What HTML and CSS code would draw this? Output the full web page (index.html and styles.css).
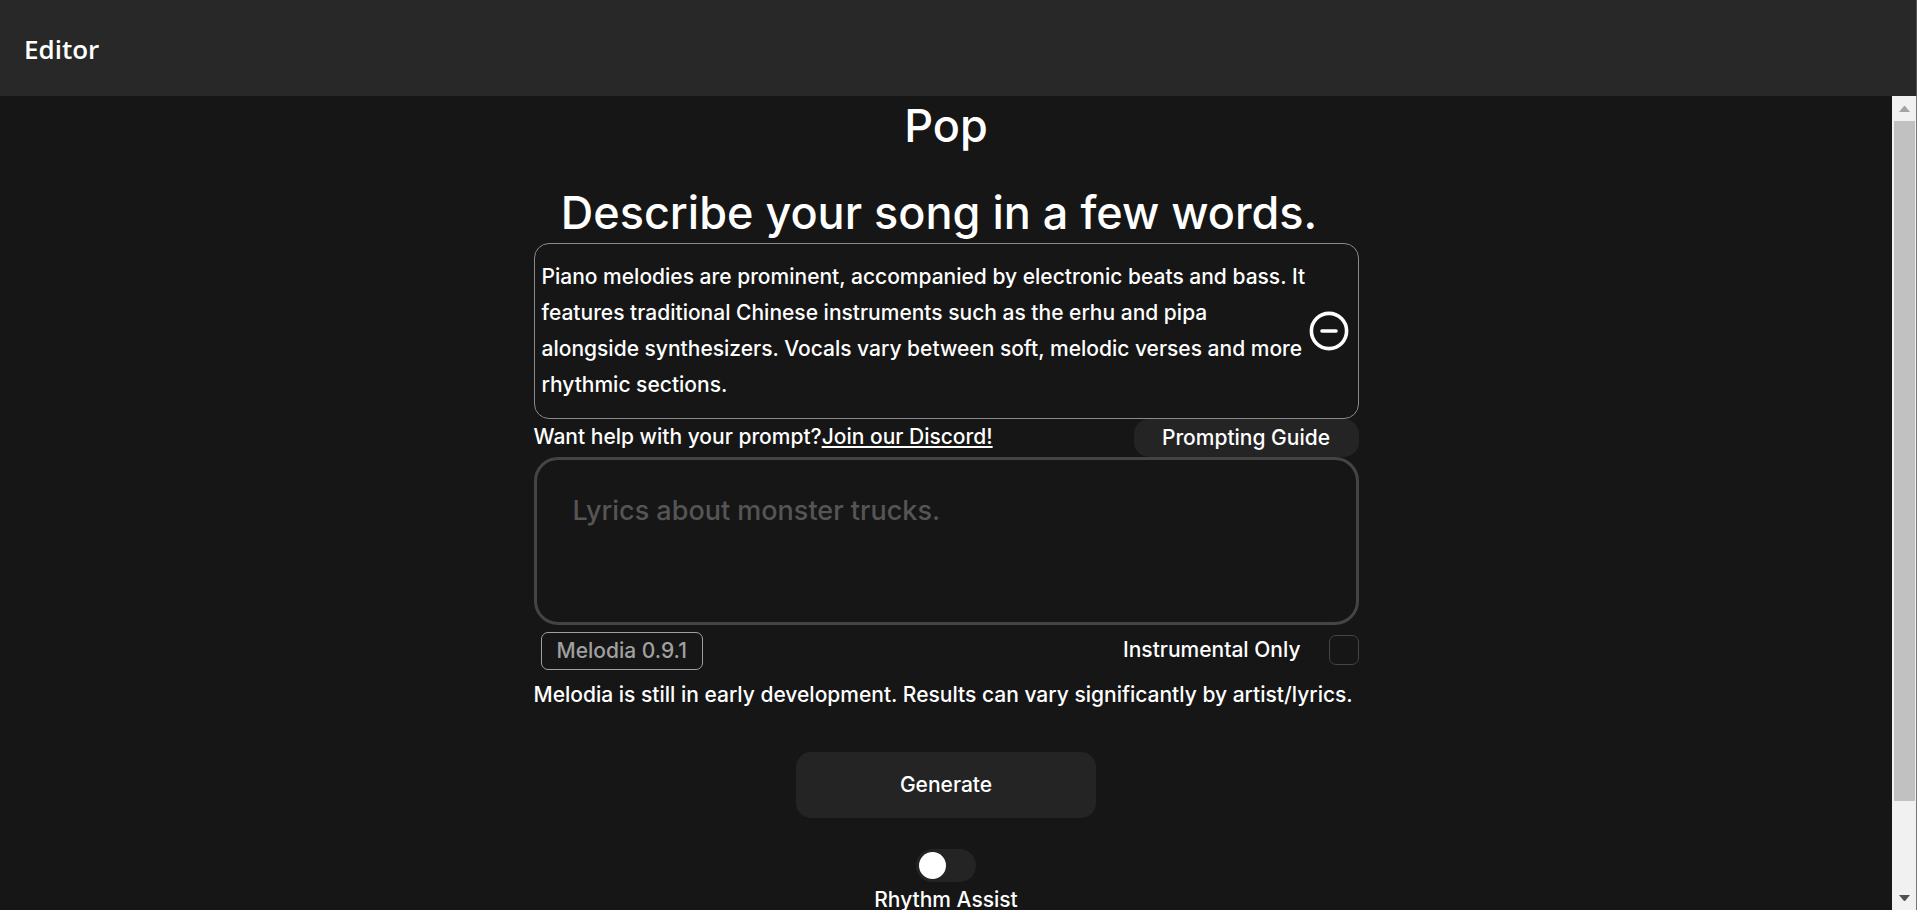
FILE: index.html
```html
<!DOCTYPE html>
<html lang="en">
<head>
  <meta charset="UTF-8" />
  <meta name="viewport" content="width=device-width, initial-scale=1.0"/>
  <title>Editor</title>
  <link rel="stylesheet" href="styles.css">
</head>
<body>
  <header class="topbar">
    <div class="topbar-title">Editor</div>
  </header>

  <div class="page">
    <main class="content">
      <div class="editor">
        <h1 class="genre">Pop</h1>
        <h2 class="heading">Describe your song in a few words.</h2>

        <div class="prompt">
          <p class="prompt-text">Piano melodies are prominent, accompanied by electronic beats and bass. It features traditional Chinese instruments such as the erhu and pipa alongside synthesizers. Vocals vary between soft, melodic verses and more rhythmic sections.</p>
          <button class="remove" type="button" aria-label="Remove prompt">
            <svg width="40" height="40" viewBox="0 0 40 40" fill="none" stroke="#fff" stroke-width="3.6" stroke-linecap="round">
              <circle cx="20" cy="20" r="17.6" />
              <path d="M13 20h14" />
            </svg>
          </button>
        </div>

        <div class="help">
          <p>Want help with your prompt?<a href="#">Join our Discord!</a></p>
          <button class="guide" type="button">Prompting Guide</button>
        </div>

        <textarea class="lyrics" aria-label="Lyrics" placeholder="Lyrics about monster trucks."></textarea>

        <div class="options">
          <span class="version">Melodia 0.9.1</span>
          <label class="instrumental">Instrumental Only <input type="checkbox"></label>
        </div>
        <p class="notice">Melodia is still in early development. Results can vary significantly by artist/lyrics.</p>

        <button class="generate" type="button">Generate</button>

        <label class="assist">
          <input class="switch" type="checkbox" role="switch">
          Rhythm Assist
        </label>
      </div>
    </main>

    <div class="scrollbar" aria-hidden="true">
      <svg class="arrow" width="11" height="6" viewBox="0 0 11 6"><path d="M0 6L5 0h1l5 6z" fill="#a3a3a3" /></svg>
      <div class="track"><div class="thumb"></div></div>
      <svg class="arrow" width="11" height="6" viewBox="0 0 11 6"><path d="M0 0L5 6h1l5-6z" fill="#505050" /></svg>
    </div>
  </div>
</body>
</html>
```
FILE: styles.css
```css
* {
  box-sizing: border-box;
}
body {
  margin: 0;
  height: 100vh;
  display: flex;
  flex-direction: column;
  overflow: hidden;
  background: #161616;
  color: #fff;
  font-family: Inter, sans-serif;
  font-size: 21px;
  font-weight: 500;
  line-height: 36px;
}
h1, h2, p {
  margin: 0;
}
button, input, textarea {
  font: inherit;
  color: inherit;
  margin: 0;
}
button {
  border: none;
  padding: 0;
  cursor: pointer;
}
.topbar {
  display: flex;
  align-items: center;
  flex: none;
  height: 96px;
  padding: 2px 24px 0;
  background: #282828;
  border-right: 1px solid #555;
}
.topbar-title {
  font-family: "Open Sans", sans-serif;
  font-size: 26px;
  font-weight: 600;
}
.page {
  display: flex;
  flex: 1;
  min-height: 0;
}
.content {
  flex: 1;
  overflow: hidden;
}
.editor {
  display: flex;
  flex-direction: column;
  width: 100%;
  max-width: 825px;
  margin: 0 auto;
}
.genre, .heading {
  font-size: 45px;
  font-weight: 500;
  line-height: 60px;
  text-align: center;
}
.heading {
  margin-top: 27px;
  padding-right: 14px;
}
.prompt {
  display: flex;
  align-items: center;
  padding: 15px 9px 15px 7px;
  border: 1px solid #8a8a8a;
  border-radius: 15px;
}
.prompt-text {
  flex: 1;
}
.remove {
  display: flex;
  background: none;
}
.help {
  display: flex;
  justify-content: space-between;
}
.help a {
  color: inherit;
}
.guide {
  width: 225px;
  height: 38px;
  border-radius: 15px;
  background: #242424;
}
.lyrics {
  width: 100%;
  height: 168px;
  padding: 33px 36px;
  border: 3px solid #444;
  border-radius: 24px;
  background: transparent;
  font-size: 27px;
  resize: none;
}
.lyrics::placeholder {
  color: #555;
}
.options {
  display: flex;
  justify-content: space-between;
  align-items: flex-start;
  margin-top: 7px;
  padding-left: 7px;
}
.version {
  padding: 0 15px;
  border: 1px solid #a0a0a0;
  border-radius: 7px;
  color: #a0a0a0;
}
.instrumental {
  display: flex;
  align-items: center;
  gap: 28px;
}
.instrumental input {
  appearance: none;
  width: 30px;
  height: 30px;
  border: 1px solid #444;
  border-radius: 7px;
}
.instrumental input:checked {
  background: #fff;
}
.notice {
  margin-top: 7px;
}
.generate {
  align-self: center;
  width: 300px;
  height: 66px;
  margin-top: 39px;
  border-radius: 15px;
  background: #242424;
}
.assist {
  display: flex;
  flex-direction: column;
  align-items: center;
  margin-top: 31px;
}
.switch {
  appearance: none;
  display: flex;
  width: 60px;
  height: 33px;
  padding: 3px;
  border-radius: 17px;
  background: #242424;
}
.switch::before {
  content: "";
  width: 27px;
  height: 27px;
  border-radius: 50%;
  background: #fff;
}
.switch:checked {
  justify-content: flex-end;
}
.scrollbar {
  display: flex;
  flex-direction: column;
  flex: none;
  width: 25px;
  background: #f1f1f1;
  border-right: 1px solid #777;
}
.arrow {
  flex: none;
  align-self: center;
  margin: 10px 0 9px;
}
.track {
  flex: 1;
  padding: 0 1px 0 2px;
}
.thumb {
  height: 89%;
  background: #c1c1c1;
}
```
